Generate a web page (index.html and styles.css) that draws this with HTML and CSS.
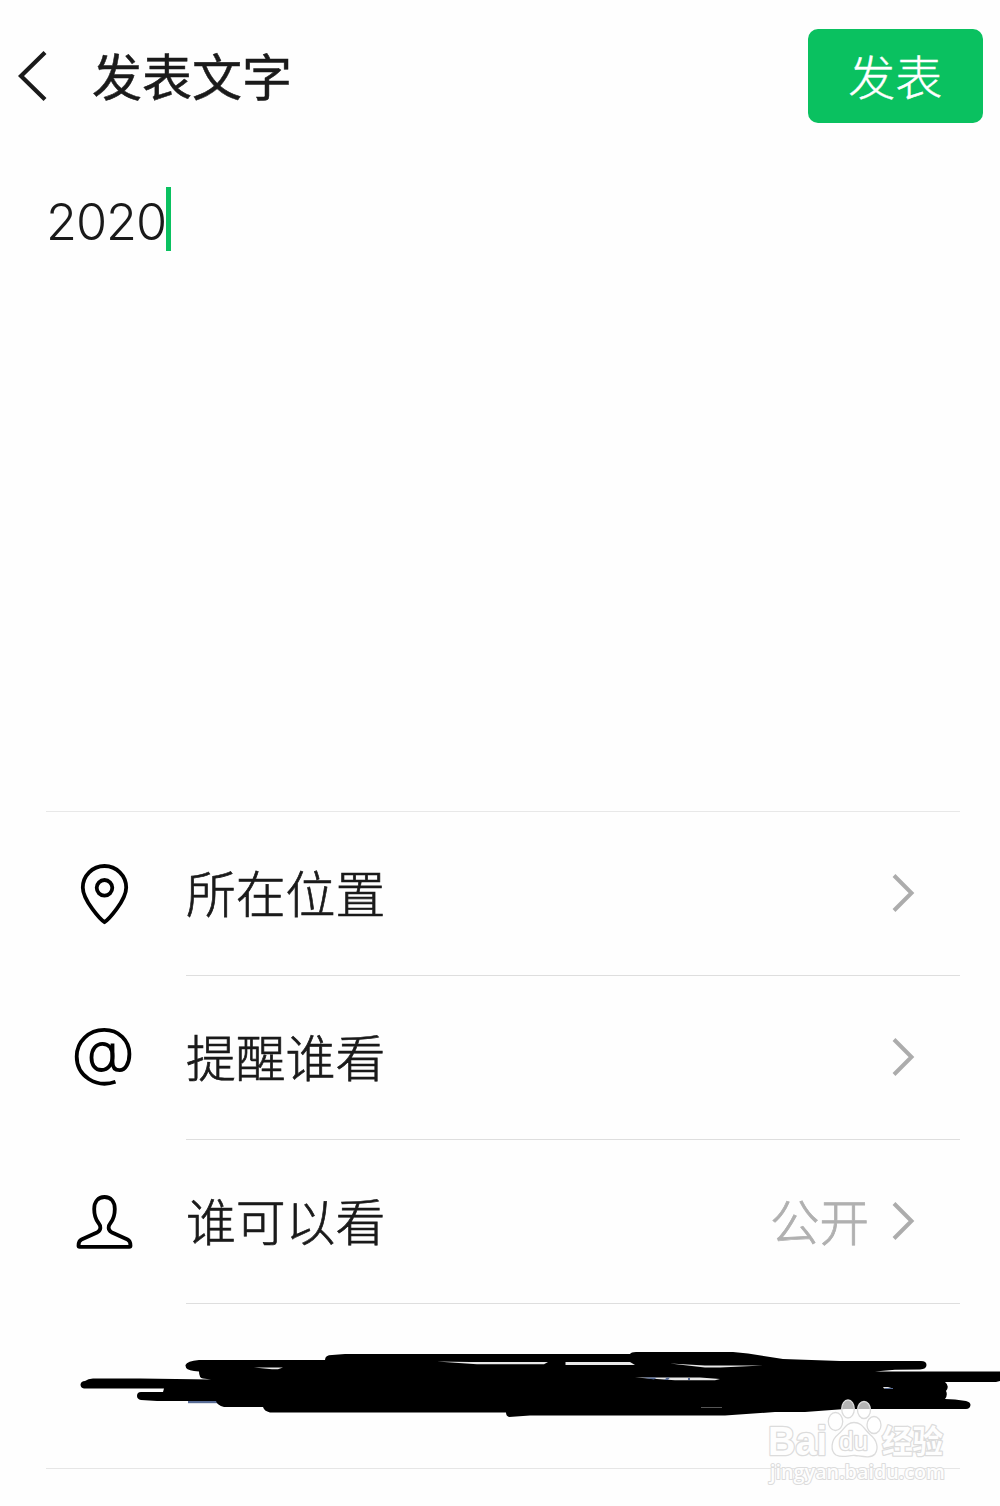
FILE: index.html
```html
<!DOCTYPE html>
<html lang="zh-CN">
<head>
    <meta charset="UTF-8">
    <meta name="viewport" content="width=device-width, initial-scale=1.0">
    <title>发表文字</title>
    <link rel="stylesheet" href="styles.css">
</head>
<body>
    <header class="header">
        <svg class="back" width="32" height="56" viewBox="0 0 32 56">
            <path d="M29 4.500L5 28l24 23.500"/>
        </svg>
        <h1 class="title">发表文字</h1>
        <button class="publish">发表</button>
    </header>

    <main class="editor">
        <span class="editor-text">2020</span><span class="caret"></span>
    </main>

    <section class="options">
        <div class="row">
            <svg class="icon" width="60" height="64" viewBox="74 862 60 64">
                <path d="M104.500 922C101 920 82.800 900.500 82.800 887.500a21.700 21.500 0 0 1 43.400 0C126.200 900.500 108 920 104.500 922z"/>
                <circle cx="104.500" cy="887.800" r="7.800"/>
            </svg>
            <div class="row-body">
                <span class="label">所在位置</span>
                <svg class="arrow" width="26" height="42" viewBox="0 0 26 42"><path d="M3 3.500L20.500 21 3 38.500"/></svg>
            </div>
        </div>
        <div class="row">
            <svg class="icon" width="60" height="64" viewBox="74 1026 60 64">
                <path d="M115.500 1081.800C96 1088.500 76.700 1076 76.700 1056.500c0-15 12-26.700 27.500-26.700 14.500 0 25.200 10.500 25.200 24.200 0 9-4 16.200-9.700 16.200-4.700 0-7.200-3-7.200-8.200v-18.500"/>
                <path d="M112.500 1056c0 8.500-4.500 14-11 14-6.300 0-10-5-10-12.500 0-8 4.500-13.700 11-13.700 6 0 10 4.500 10 12.200z"/>
            </svg>
            <div class="row-body">
                <span class="label">提醒谁看</span>
                <svg class="arrow" width="26" height="42" viewBox="0 0 26 42"><path d="M3 3.500L20.500 21 3 38.500"/></svg>
            </div>
        </div>
        <div class="row">
            <svg class="icon" width="60" height="64" viewBox="74 1190 60 64">
                <path d="M104.500 1197c-6.500 0-10.300 5-10.300 12 0 6.500 1.500 10.500 4.300 14 2.500 3 2.800 7-1 9.200L81.500 1239.500c-2.500 1.200-3 3.500-3 6.200 0 .7.500 1.100 1.200 1.100h49.600c.7 0 1.200-.4 1.200-1.100 0-2.700-.5-5-3-6.200L111.500 1232.200c-3.800-2.200-3.500-6.200-1-9.200 2.800-3.500 4.300-7.500 4.300-14 0-7-3.800-12-10.300-12z"/>
            </svg>
            <div class="row-body">
                <span class="label">谁可以看</span>
                <span class="value">公开</span>
                <svg class="arrow" width="26" height="42" viewBox="0 0 26 42"><path d="M3 3.500L20.500 21 3 38.500"/></svg>
            </div>
        </div>
    </section>

    <!-- hidden contact row -->
    <svg class="scribble" width="1000" height="164" viewBox="0 1304 1000 164">
        <path class="link" d="M188 1399h30v4.200h-30z"/>
        <path d="M85 1381Q88 1378.500 93 1378.500L140 1378.500 211 1379.500 203 1378.500Q199 1378 199 1371.500L194 1371Q185 1370 185.500 1365 187 1361 199 1360L325 1360Q325 1355 332 1355L345 1354H630Q631 1352 636 1352L733 1352 748 1353.500 783 1359 840 1361H921Q926.500 1361 926.500 1365 926.500 1369 920 1369.500L895 1369.800 875 1371.500H1000V1381L996 1382H945Q950 1386 946 1391 948 1395 945 1399L955 1399.500 966 1401Q970.500 1402 970.500 1405 970 1409 966 1409H845L805 1412H775L725 1415.500H530L509 1417Q506 1416 506 1412.500H270Q264 1411 263 1407H224Q217 1405 216 1401H157L141 1400Q137 1399 137 1396 137 1392 141 1392L163 1392 164 1388.500H84Q80.500 1388 80.500 1384.500 81 1381 85 1381z"/>
        <g class="gap">
            <path d="M437 1361.500L470 1362H548L544 1364.300H477z"/>
            <path d="M565.500 1362H630L635 1365H565.500z"/>
            <path d="M254 1367.500H283L278 1369.200H272z"/>
            <path d="M670 1363.500L705 1365.500H763L720 1367.500H705z"/>
            <path d="M635 1377.500H700L720 1379 715 1380.200H675z"/>
            <path d="M883 1387H888L893 1388.500H884z"/>
        </g>
        <path class="link" d="M642 1377.500h15l-3 2zM664 1380l3-2.500h3l-2 2.500zM885 1388h8v1h-8zM688 1378h2v2h-2z"/>
        <path class="hairline" d="M701 1407.500h21"/>
    </svg>
    <div class="footer-line"></div>

    <svg class="watermark" width="186" height="96" viewBox="764 1396 186 96">
        <g class="paw">
            <ellipse cx="835.500" cy="1421.500" rx="7.200" ry="9"/>
            <ellipse cx="848" cy="1409" rx="6.300" ry="9"/>
            <ellipse cx="864" cy="1410" rx="6.500" ry="8.500"/>
            <ellipse cx="874" cy="1425" rx="7" ry="8.500"/>
            <path d="M854 1422.500C846 1422.500 844 1430 838 1434.500 831 1440 830 1451 836 1455 843 1458.500 848 1455 855 1455.500 863 1456.500 871 1458.500 875 1454 879 1448 877 1440 870 1434.500 864 1429 862 1422.500 854 1422.500z"/>
        </g>
        <text class="brand" x="768" y="1454.500" textLength="59" lengthAdjust="spacingAndGlyphs">Bai</text>
        <text class="du" x="839" y="1450" textLength="29" lengthAdjust="spacingAndGlyphs">du</text>
        <text class="brand-cn" x="882" y="1453" textLength="61" lengthAdjust="spacingAndGlyphs">经验</text>
        <text class="site" x="770" y="1478.500" textLength="175" lengthAdjust="spacingAndGlyphs">jingyan.baidu.com</text>
    </svg>
</body>
</html>
```
FILE: styles.css
```css
* {
    box-sizing: border-box;
}
body {
    position: relative;
    width: 1000px;
    height: 1506px;
    margin: 0;
    overflow: hidden;
    background: #fefefe;
    color: #1a1a1a;
    font-family: Inter, "Noto Sans CJK SC", sans-serif;
}
.header {
    display: flex;
    align-items: center;
    height: 152px;
    padding: 0 17px 0 16px;
}
svg {
    flex: none;
    display: block;
    fill: none;
}
.back {
    stroke: #1a1a1a;
    stroke-width: 4.2;
}
.title {
    flex: 1;
    margin: 0 0 0 44px;
    padding-top: 3px;
    font-size: 50px;
    font-weight: 400;
    line-height: 70px;
    -webkit-text-stroke: 0.5px #1a1a1a;
}
.publish {
    width: 175.500px;
    height: 94px;
    padding: 0 0 4px;
    border: none;
    border-radius: 10px;
    background: #0ac160;
    color: #fff;
    font-family: inherit;
    font-size: 47px;
    font-weight: 300;
    -webkit-text-stroke: 0.4px #fff;
}
.editor {
    display: flex;
    align-items: flex-start;
    height: 659px;
    padding: 35px 46px 0;
}
.editor-text {
    font-size: 50.500px;
    font-weight: 300;
    line-height: 70px;
    letter-spacing: -1.1px;
}
.caret {
    width: 5px;
    height: 64px;
    background: #0ac160;
}
.options {
    margin: 0 40px 0 46px;
    border-top: 1px solid #e8e8e8;
}
.row {
    display: flex;
    align-items: center;
    height: 164px;
    padding-left: 28px;
}
.icon {
    margin-right: 52px;
    stroke: #000;
    stroke-width: 3.8;
}
.row-body {
    flex: 1;
    display: flex;
    align-items: center;
    height: 164px;
    padding: 0 43px 1px 0;
    border-bottom: 1px solid #dedede;
}
.label {
    flex: 1;
    padding-bottom: 4px;
    font-size: 49.800px;
    font-weight: 300;
    -webkit-text-stroke: 0.7px #1a1a1a;
}
.value {
    margin-right: 22px;
    padding-bottom: 3px;
    color: #b0b0b0;
    font-size: 49.500px;
    font-weight: 300;
    -webkit-text-stroke: 0.8px #b0b0b0;
}
.arrow {
    stroke: #acacac;
    stroke-width: 4;
}
.scribble {
    fill: #000;
}
.scribble .gap {
    fill: #e8e8e8;
}
.scribble .link {
    fill: #576b95;
}
.scribble .hairline {
    stroke: #555;
}
.footer-line {
    height: 1px;
    margin: 0 40px 0 46px;
    background: #e6e6e6;
}
/* sits over the scribble and the last divider */
.watermark {
    position: absolute;
    left: 764px;
    top: 1396px;
    fill: #fefefe;
    stroke: #dcdcdc;
    stroke-width: 2.6;
    stroke-linejoin: round;
}
.watermark text {
    paint-order: stroke;
}
.paw {
    fill: rgba(255, 255, 255, 0.7);
    stroke-width: 1.3;
}
.brand {
    font: bold 41px "Liberation Sans", sans-serif;
}
.du {
    font: 26px "Liberation Sans", sans-serif;
}
.brand-cn {
    font: bold 32px "Noto Sans CJK SC", sans-serif;
}
.site {
    font: 600 20px "Open Sans", sans-serif;
    stroke-width: 2;
}
```
